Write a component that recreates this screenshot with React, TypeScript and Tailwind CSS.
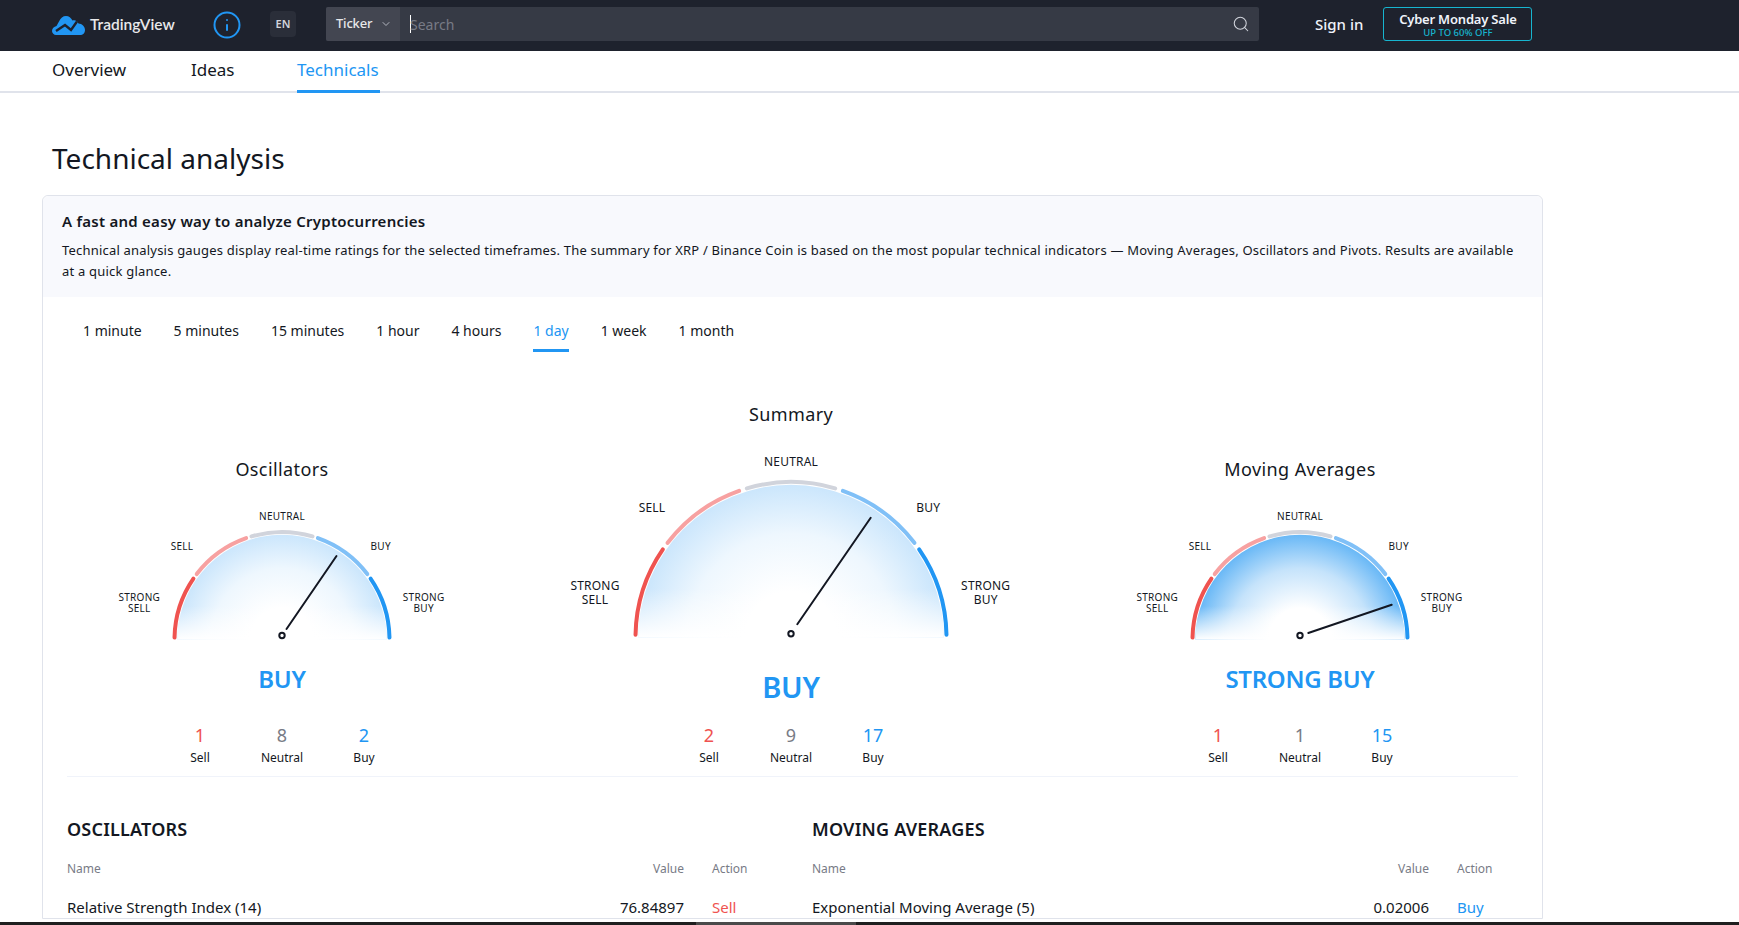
import React from 'react';
import { ChevronDown, Info, Search } from 'lucide-react';

const font = '[font-family:"Noto_Sans",sans-serif]';

type Pt = [number, number];

type GaugeProps = {
  id: string;
  title: string;
  big?: boolean;
  needle: [Pt, Pt];
  verdict: string;
  edge: string;
  mid: string;
  counts: [string, string, string];
};

const SEGMENTS: [number, number, string][] = [
  [1, 34.5, '#ef5350'],
  [37.5, 70.5, '#f7a1a1'],
  [73.5, 106.5, '#d1d4dc'],
  [109.5, 142.5, '#80c0f7'],
  [145.5, 179, '#2196f3'],
];

function arcPath(cx: number, cy: number, r: number, from: number, to: number) {
  const a = (from * Math.PI) / 180;
  const b = (to * Math.PI) / 180;
  return `M ${cx - r * Math.cos(a)} ${cy - r * Math.sin(a)} A ${r} ${r} 0 0 1 ${cx - r * Math.cos(b)} ${cy - r * Math.sin(b)}`;
}

function Gauge({ id, title, big, needle, verdict, edge, mid, counts }: GaugeProps) {
  const cx = 230;
  const height = big ? 200 : 145;
  const cy = big ? 192.5 : 139.5;
  const r = big ? 155.5 : 107.5;
  const fillR = r - 2.8;
  const pivotY = big ? 188.7 : 135.5;
  const labelSize = big ? 12 : 10;
  const labels: [string, number, number][] = big
    ? [
        ['NEUTRAL', 230, 16.7],
        ['SELL', 91, 62.3],
        ['BUY', 367.3, 62.3],
        ['STRONG', 34, 140.3],
        ['SELL', 34, 154.3],
        ['STRONG', 424.7, 140.3],
        ['BUY', 424.7, 154.3],
      ]
    : [
        ['NEUTRAL', 230, 15.7],
        ['SELL', 130, 46],
        ['BUY', 328.7, 46],
        ['STRONG', 87.3, 97],
        ['SELL', 87.3, 108],
        ['STRONG', 371.7, 97],
        ['BUY', 371.7, 108],
      ];

  return (
    <div className="flex flex-col items-center">
      <h3 className="text-[18px] leading-[24px] tracking-[0.4px] text-[#131722] mb-[19px]">{title}</h3>
      <svg width={460} height={height} viewBox={`0 0 460 ${height}`} className="block">
        <defs>
          <radialGradient id={`${id}-fill`} gradientUnits="userSpaceOnUse" cx={cx} cy={cy} r={fillR}>
            <stop offset="0.3" stopColor="#ffffff" />
            <stop offset="0.68" stopColor={mid} />
            <stop offset="1" stopColor={edge} />
          </radialGradient>
          <linearGradient id={`${id}-fade`} x1="0" x2="0" y1="0" y2="1" gradientUnits="objectBoundingBox">
            <stop offset="0.68" stopColor="#ffffff" stopOpacity="0" />
            <stop offset="1" stopColor="#ffffff" stopOpacity="1" />
          </linearGradient>
        </defs>
        <path d={`M ${cx - fillR} ${cy} A ${fillR} ${fillR} 0 0 1 ${cx + fillR} ${cy} Z`} fill={`url(#${id}-fill)`} />
        <path d={`M ${cx - fillR} ${cy} A ${fillR} ${fillR} 0 0 1 ${cx + fillR} ${cy} Z`} fill={`url(#${id}-fade)`} />
        {SEGMENTS.map(([from, to, color]) => (
          <path key={from} d={arcPath(cx, cy, r, from, to)} fill="none" stroke={color} strokeWidth={4} strokeLinecap="round" />
        ))}
        {labels.map(([text, x, y], i) => (
          <text
            key={i}
            x={x}
            y={y}
            textAnchor="middle"
            dominantBaseline="central"
            fontSize={labelSize}
            fill="#131722"
            letterSpacing={big ? 0.2 : 0.3}
          >
            {text}
          </text>
        ))}
        <line x1={needle[0][0]} y1={needle[0][1]} x2={needle[1][0]} y2={needle[1][1]} stroke="#131722" strokeWidth={2} strokeLinecap="round" />
        <circle cx={cx} cy={pivotY} r={2.7} fill="#ffffff" stroke="#131722" strokeWidth={2} />
      </svg>
      <div
        className={`font-semibold text-center text-[#2196f3] tracking-[-0.3px] ${big ? 'text-[29px] leading-[36px] mt-[24px]' : 'text-[24px] leading-[30px] mt-[19px]'}`}
      >
        {verdict}
      </div>
      <div className={`flex ${big ? 'mt-[18px]' : 'mt-[29px]'}`}>
        {[
          ['Sell', '#ef5350', counts[0]],
          ['Neutral', '#787b86', counts[1]],
          ['Buy', '#2196f3', counts[2]],
        ].map(([label, color, n]) => (
          <div key={label} className="w-[82px] flex flex-col items-center">
            <span className="text-[18px] leading-[24px]" style={{ color }}>
              {n}
            </span>
            <span className="text-[12px] leading-[18px] mt-[2px] text-[#131722]">{label}</span>
          </div>
        ))}
      </div>
    </div>
  );
}

function Table({ title, name, value, action, color }: { title: string; name: string; value: string; action: string; color: string }) {
  return (
    <div className="w-[720px]">
      <h3 className="text-[18px] leading-[24px] font-semibold tracking-[0.2px] text-[#131722] uppercase">{title}</h3>
      <div className="grid grid-cols-[1fr_75px] mt-[19px] text-[12px] leading-[18px] text-[#787b86]">
        <div className="flex justify-between pr-[28px]">
          <span>Name</span>
          <span>Value</span>
        </div>
        <span>Action</span>
      </div>
      <div className="grid grid-cols-[1fr_75px] mt-[18px] text-[15px] leading-[22px] text-[#131722]">
        <div className="flex justify-between pr-[28px]">
          <span>{name}</span>
          <span>{value}</span>
        </div>
        <span className={color}>{action}</span>
      </div>
    </div>
  );
}

export default function App() {
  const tabs = ['1 minute', '5 minutes', '15 minutes', '1 hour', '4 hours', '1 day', '1 week', '1 month'];

  return (
    <div className={`h-[925px] w-full flex flex-col overflow-hidden bg-white text-[#131722] ${font}`}>
      <header className="h-[51px] shrink-0 bg-[#1e222d] flex items-center pl-[52px] pb-[3px]">
        <svg width="33" height="19" viewBox="0 0 33 19" className="shrink-0 mt-[3px]">
          <path
            d="M0 15C0 12.5 2 10.5 4.5 10L7 5.5C8.5 2 11 0 14 0C17 0 19 2 20.5 4.5C23 3.5 25.5 5 26.5 7.5C30 7.5 33 10.5 33 14C33 17 31 19 28 19L4 19C2 19 0 17 0 15Z"
            fill="#2196f3"
          />
          <path d="M4 15L13 9L19 14L25 5.5" fill="none" stroke="#1e222d" strokeWidth="2.4" />
        </svg>
        <span className="ml-[5px] mt-[2px] w-[123px] text-[15.5px] font-semibold text-[#e8e8ea] [font-family:Lato,sans-serif]">TradingView</span>
        <Info size={30} strokeWidth={1.6} className="text-[#2196f3] shrink-0 -ml-[1px] mt-[2px]" />
        <div className="ml-[28px] w-[26px] h-[26px] rounded-[4px] bg-[#2a2e39] flex items-center justify-center text-[11px] font-semibold text-[#d1d4dc]">
          EN
        </div>
        <div className="ml-[30px] w-[933px] h-[34px] rounded-[2px] bg-[#363a45] flex items-center">
          <div className="w-[74px] h-full bg-[#434651] flex items-center pl-[10px] text-[13px] tracking-[-0.2px] font-medium text-[#e8e8ea] rounded-l-[2px]">
            Ticker
            <ChevronDown size={12} className="ml-[8px] text-[#b2b5be]" />
          </div>
          <span className="ml-[10px] w-px h-[18px] bg-white" />
          <span className="-ml-px text-[14px] text-[#787b86] flex-1">Search</span>
          <Search size={18} strokeWidth={1.4} className="mr-[9px] text-[#d1d4dc]" />
        </div>
        <span className="ml-[56px] text-[15px] font-medium text-[#f0f3fa]">Sign in</span>
        <div className="ml-[20px] w-[149px] h-[34px] rounded-[3px] border border-[#17b5cf] flex flex-col items-center justify-center">
          <span className="text-[13px] leading-[16px] tracking-[-0.2px] font-semibold text-[#f0f3fa]">Cyber Monday Sale</span>
          <span className="text-[9.5px] leading-[11px] font-medium text-[#17b5cf]">UP TO 60% OFF</span>
        </div>
      </header>

      <nav className="h-[42px] shrink-0 border-b-2 border-[#e0e3eb] flex pl-[52px] gap-[65px] text-[17px]">
        <span className="h-[42px] flex items-center pb-[4px] w-[74px]">Overview</span>
        <span className="h-[42px] flex items-center pb-[4px] w-[41px]">Ideas</span>
        <span className="h-[42px] flex items-center pb-[1px] text-[#2196f3] border-b-[3px] border-[#2196f3] w-[83px]">Technicals</span>
      </nav>

      <main className="flex-1 min-h-0 overflow-hidden">
        <h1 className="ml-[52px] mt-[46px] text-[28px] leading-[38px]">Technical analysis</h1>
        <section className="ml-[42px] mt-[18px] w-[1501px] rounded-t-[6px] border border-[#e0e3eb]">
          <div className="bg-[#f8f9fd] h-[101px] rounded-t-[6px] px-[19px] pt-[14px]">
            <h2 className="text-[15px] leading-[22px] tracking-[0.25px] font-semibold">A fast and easy way to analyze Cryptocurrencies</h2>
            <p className="mt-[8px] text-[13px] leading-[21px] tracking-[0.2px]">
              Technical analysis gauges display real-time ratings for the selected timeframes. The summary for XRP / Binance Coin is based on the most popular technical indicators — Moving Averages, Oscillators and Pivots. Results are available at a quick glance.
            </p>
          </div>

          <div className="flex ml-[40px] mt-[19px] gap-[32px] text-[14px]">
            {tabs.map((t) =>
              t === '1 day' ? (
                <span key={t} className="h-[36px] border-b-[3px] border-[#2196f3] text-[#2196f3] leading-[30px]">
                  {t}
                </span>
              ) : (
                <span key={t} className="h-[36px] leading-[30px]">
                  {t}
                </span>
              ),
            )}
          </div>

          <div className="flex items-end gap-[49px] ml-[9px] mt-[50px]">
            <Gauge
              id="osc"
              title="Oscillators"
              needle={[[234.5, 129], [284.5, 56]]}
              verdict="BUY"
              edge="#cbe6fc"
              mid="#eef7fe"
              counts={['1', '8', '2']}
            />
            <Gauge
              id="sum"
              big
              title="Summary"
              needle={[[236.3, 179.3], [309.7, 72.7]]}
              verdict="BUY"
              edge="#cbe6fc"
              mid="#eef7fe"
              counts={['2', '9', '17']}
            />
            <Gauge
              id="ma"
              title="Moving Averages"
              needle={[[238.3, 133], [321.7, 104.7]]}
              verdict="STRONG BUY"
              edge="#69b8f6"
              mid="#c5e3fb"
              counts={['1', '1', '15']}
            />
          </div>

          <div className="mx-[24px] mt-[9px] h-px bg-[#f0f3fa]" />

          <div className="flex gap-[25px] ml-[24px] mt-[40px]">
            <Table title="Oscillators" name="Relative Strength Index (14)" value="76.84897" action="Sell" color="text-[#ef5350]" />
            <Table title="Moving Averages" name="Exponential Moving Average (5)" value="0.02006" action="Buy" color="text-[#2196f3]" />
          </div>
        </section>
      </main>

      <div className="h-[3px] shrink-0 bg-[#1f1f1f] pl-[696px]">
        <div className="w-[160px] h-full bg-[#4a4a4a]" />
      </div>
    </div>
  );
}
